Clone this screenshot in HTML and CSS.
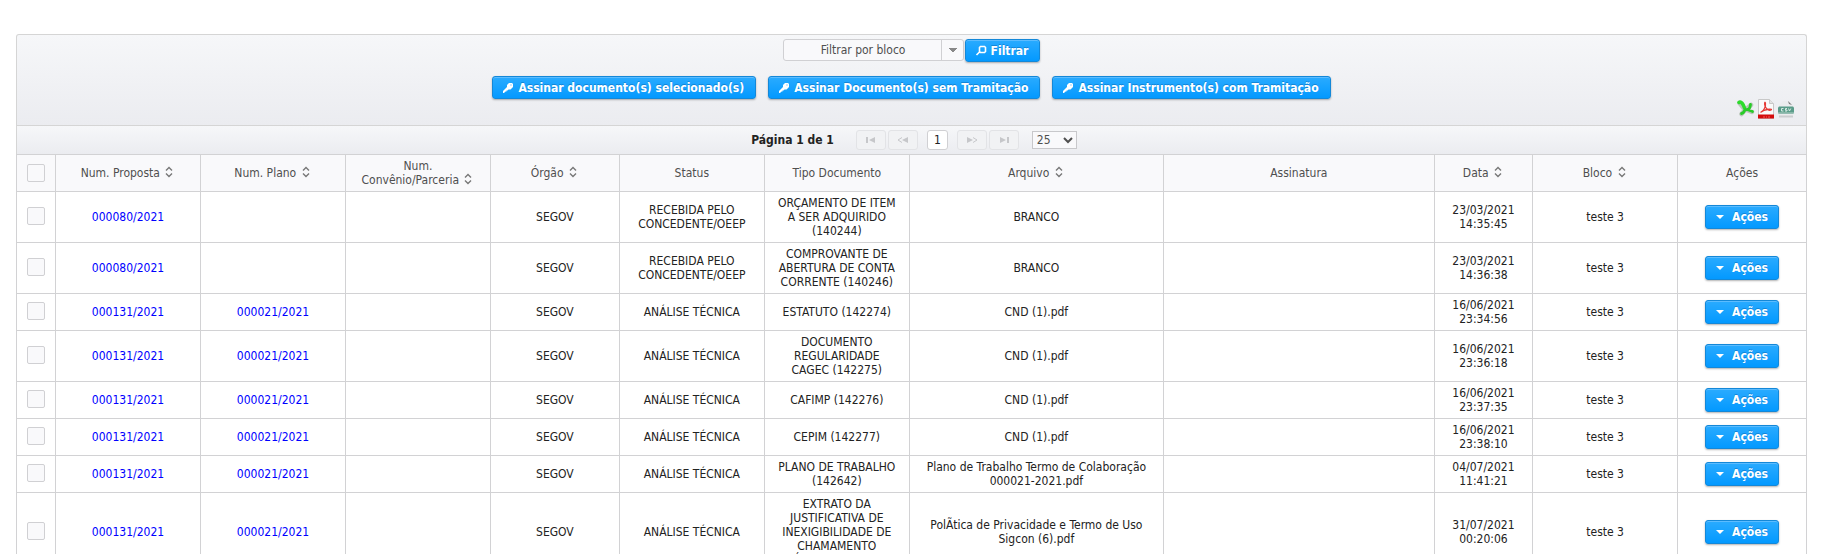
FILE: index.html
```html
<!DOCTYPE html>
<html lang="pt-BR">
<head>
<meta charset="utf-8">
<title>Assinatura de documentos</title>
<link rel="stylesheet" href="styles.css">
</head>
<body>
<svg class="sprite" aria-hidden="true">
  <symbol id="sort" viewBox="0 0 8 12"><path d="M1 4.500 4 1.500 7 4.500M1 7.500 4 10.500 7 7.500" fill="none" stroke="#777" stroke-width="1.400"/></symbol>
  <symbol id="key" viewBox="0 0 12 12"><path d="M7 1h3l1 1v3L8.500 7.500H6.500L5.500 8.500H4.500v1H3.500L2 11H1V9l4-4V3z" fill="#fff"/><path d="M8.500 2.500h1v1h-1z" fill="#35a9f7"/></symbol>
  <symbol id="lens" viewBox="0 0 12 12"><path d="M5.500 1.500h4l1 1v4l-1 1h-4l-1-1v-4zM4.500 7 1.500 10" fill="none" stroke="#fff" stroke-width="1.600"/></symbol>
  <symbol id="down" viewBox="0 0 8 4"><path d="M0 0h8L4 4z" fill="currentColor"/></symbol>
  <symbol id="first" viewBox="0 0 10 6"><path d="M0 0h2v6H0zM9 0v6L3 3z" fill="currentColor"/></symbol>
  <symbol id="prev" viewBox="0 0 12 6"><path d="M11 0v6L5 3z" fill="currentColor"/><path d="M5 .5 1 3l4 2.500" fill="none" stroke="currentColor"/></symbol>
</svg>

<main class="datatable">
  <div class="toolbar">
    <div class="toolbar-row filter">
      <select class="block-filter" aria-label="Filtrar por bloco"><option>Filtrar por bloco</option></select>
      <button class="btn"><svg class="icon"><use href="#lens"/></svg>Filtrar</button>
    </div>
    <div class="toolbar-row actions">
      <button class="btn"><svg class="icon"><use href="#key"/></svg>Assinar documento(s) selecionado(s)</button>
      <button class="btn"><svg class="icon"><use href="#key"/></svg>Assinar Documento(s) sem Tramitação</button>
      <button class="btn"><svg class="icon"><use href="#key"/></svg>Assinar Instrumento(s) com Tramitação</button>
    </div>
    <div class="exports">
      <a href="#xls" aria-label="Exportar Excel"><svg width="18" height="20" viewBox="0 0 18 20"><path d="M2.500 4 7 9.500M4.500 15 8 11 14 6M10 11l5 2" fill="none" stroke="#b9c4b9" stroke-width="4.500" stroke-linecap="round"/><path d="M2 3.500C4 2 6.500 5 7.500 9" fill="none" stroke="#2cdc2c" stroke-width="3.500" stroke-linecap="round"/><path d="M4.500 14.500C8 14 7 10 9 10.500s4 0 4.500-5M10.500 10.500l5 2" fill="none" stroke="#28cc28" stroke-width="2.800" stroke-linecap="round"/></svg></a>
      <a href="#pdf" aria-label="Exportar PDF"><svg width="18" height="20" viewBox="0 0 18 20"><path d="M1.500.5h11l4 4v15h-15z" fill="#fafafa" stroke="#c8c8c8"/><path d="M12.500.5v4h4" fill="#e4e4e4" stroke="#c8c8c8"/><path d="M1 15.500h16v4H1z" fill="#d40c0c"/><path d="M6 18h2m1 0h1m1 0h2" stroke="#ee5a5a"/><path d="M4 13c3-1 5-6 4.500-9-.5-2-1.500 0-.5 3s4 5 6 4-3-1.500-7 .5c-2 1-3.500 2-3 1.500z" fill="none" stroke="#e53935" stroke-width="1.200"/></svg></a>
      <a href="#csv" aria-label="Exportar CSV"><svg width="18" height="20" viewBox="0 0 18 20"><path d="M2 6 6 2h6l4 4v11H2z" fill="#ebecee"/><path d="m11 2 4 4-3-1z" fill="#777"/><path d="M2 7.500h14l1 1v5l-1 1H2l-1-1v-5z" fill="#5a9c89"/><path d="M1 13h16v1.500H1z" fill="#86b5a7"/><path d="M6.500 9.500h-2v2.500h2M10 9.500H8.500V11H10v1H8M11.500 9.500l1 2.500 1.300-2.500" fill="none" stroke="#d5e9e2"/><path d="M2 17.500h14" stroke="#cbcdcf" stroke-width="2"/></svg></a>
    </div>
  </div>

  <nav class="paginator" aria-label="Paginação">
    <span class="current">Página 1 de 1</span>
    <button class="page-btn" disabled aria-label="Primeira"><svg width="10" height="6"><use href="#first"/></svg></button>
    <button class="page-btn" disabled aria-label="Anterior"><svg width="12" height="6"><use href="#prev"/></svg></button>
    <button class="page-num">1</button>
    <button class="page-btn" disabled aria-label="Próxima"><svg class="flip" width="12" height="6"><use href="#prev"/></svg></button>
    <button class="page-btn" disabled aria-label="Última"><svg class="flip" width="10" height="6"><use href="#first"/></svg></button>
    <select class="page-size" aria-label="Linhas por página"><option>25</option></select>
  </nav>

  <table class="grid">
    <colgroup><col class="c-check"><col class="c-std"><col class="c-std"><col class="c-std"><col class="c-small"><col class="c-std"><col class="c-std"><col class="c-file"><col class="c-sign"><col class="c-date"><col class="c-std"><col class="c-small"></colgroup>
    <thead>
      <tr>
        <th><input type="checkbox" class="check" aria-label="Selecionar todos"></th>
        <th><button class="sort">Num. Proposta <svg><use href="#sort"/></svg></button></th>
        <th><button class="sort">Num. Plano <svg><use href="#sort"/></svg></button></th>
        <th><button class="sort">Num. Convênio/Parceria&nbsp;<svg><use href="#sort"/></svg></button></th>
        <th><button class="sort">Órgão <svg><use href="#sort"/></svg></button></th>
        <th>Status</th>
        <th>Tipo Documento</th>
        <th><button class="sort">Arquivo <svg><use href="#sort"/></svg></button></th>
        <th>Assinatura</th>
        <th><button class="sort">Data <svg><use href="#sort"/></svg></button></th>
        <th><button class="sort">Bloco <svg><use href="#sort"/></svg></button></th>
        <th>Ações</th>
      </tr>
    </thead>
    <tbody>
      <tr><td><input type="checkbox" class="check" aria-label="Selecionar"></td><td><a href="#p">000080/2021</a></td><td></td><td></td><td>SEGOV</td><td>RECEBIDA PELO CONCEDENTE/OEEP</td><td>ORÇAMENTO DE ITEM A SER ADQUIRIDO (140244)</td><td>BRANCO</td><td></td><td>23/03/2021 14:35:45</td><td>teste 3</td><td><button class="btn menu"><svg class="caret"><use href="#down"/></svg>Ações</button></td></tr>
      <tr><td><input type="checkbox" class="check" aria-label="Selecionar"></td><td><a href="#p">000080/2021</a></td><td></td><td></td><td>SEGOV</td><td>RECEBIDA PELO CONCEDENTE/OEEP</td><td>COMPROVANTE DE ABERTURA DE CONTA CORRENTE (140246)</td><td>BRANCO</td><td></td><td>23/03/2021 14:36:38</td><td>teste 3</td><td><button class="btn menu"><svg class="caret"><use href="#down"/></svg>Ações</button></td></tr>
      <tr><td><input type="checkbox" class="check" aria-label="Selecionar"></td><td><a href="#p">000131/2021</a></td><td><a href="#n">000021/2021</a></td><td></td><td>SEGOV</td><td>ANÁLISE TÉCNICA</td><td>ESTATUTO (142274)</td><td>CND (1).pdf</td><td></td><td>16/06/2021 23:34:56</td><td>teste 3</td><td><button class="btn menu"><svg class="caret"><use href="#down"/></svg>Ações</button></td></tr>
      <tr><td><input type="checkbox" class="check" aria-label="Selecionar"></td><td><a href="#p">000131/2021</a></td><td><a href="#n">000021/2021</a></td><td></td><td>SEGOV</td><td>ANÁLISE TÉCNICA</td><td>DOCUMENTO REGULARIDADE CAGEC (142275)</td><td>CND (1).pdf</td><td></td><td>16/06/2021 23:36:18</td><td>teste 3</td><td><button class="btn menu"><svg class="caret"><use href="#down"/></svg>Ações</button></td></tr>
      <tr><td><input type="checkbox" class="check" aria-label="Selecionar"></td><td><a href="#p">000131/2021</a></td><td><a href="#n">000021/2021</a></td><td></td><td>SEGOV</td><td>ANÁLISE TÉCNICA</td><td>CAFIMP (142276)</td><td>CND (1).pdf</td><td></td><td>16/06/2021 23:37:35</td><td>teste 3</td><td><button class="btn menu"><svg class="caret"><use href="#down"/></svg>Ações</button></td></tr>
      <tr><td><input type="checkbox" class="check" aria-label="Selecionar"></td><td><a href="#p">000131/2021</a></td><td><a href="#n">000021/2021</a></td><td></td><td>SEGOV</td><td>ANÁLISE TÉCNICA</td><td>CEPIM (142277)</td><td>CND (1).pdf</td><td></td><td>16/06/2021 23:38:10</td><td>teste 3</td><td><button class="btn menu"><svg class="caret"><use href="#down"/></svg>Ações</button></td></tr>
      <tr><td><input type="checkbox" class="check" aria-label="Selecionar"></td><td><a href="#p">000131/2021</a></td><td><a href="#n">000021/2021</a></td><td></td><td>SEGOV</td><td>ANÁLISE TÉCNICA</td><td>PLANO DE TRABALHO (142642)</td><td>Plano de Trabalho Termo de Colaboração 000021-2021.pdf</td><td></td><td>04/07/2021 11:41:21</td><td>teste 3</td><td><button class="btn menu"><svg class="caret"><use href="#down"/></svg>Ações</button></td></tr>
      <tr><td><input type="checkbox" class="check" aria-label="Selecionar"></td><td><a href="#p">000131/2021</a></td><td><a href="#n">000021/2021</a></td><td></td><td>SEGOV</td><td>ANÁLISE TÉCNICA</td><td>EXTRATO DA JUSTIFICATIVA DE INEXIGIBILIDADE DE CHAMAMENTO PÚBLICO (143210)</td><td>PolÃtica de Privacidade e Termo de Uso Sigcon (6).pdf</td><td></td><td>31/07/2021 00:20:06</td><td>teste 3</td><td><button class="btn menu"><svg class="caret"><use href="#down"/></svg>Ações</button></td></tr>
    </tbody>
  </table>
</main>
</body>
</html>
```
FILE: styles.css
```css
* { box-sizing: border-box; }
body {
  margin: 0;
  padding: 34px 18px 0 16px;
  background: #fff;
  color: #222;
  font: 12px/14px Tahoma, "DejaVu Sans Condensed", "DejaVu Sans", sans-serif;
}
.sprite { display: none; }
button, select, input { font: inherit; margin: 0; }

.toolbar {
  display: flex;
  flex-direction: column;
  padding: 4px 11px 6px;
  border: 1px solid #d5d5d5;
  border-bottom: 0;
  border-radius: 3px 3px 0 0;
  background: linear-gradient(#f6f7f9, #ebecf0);
}
.toolbar-row { display: flex; justify-content: center; }
.filter { gap: 1px; margin-bottom: 14px; }
.actions { gap: 12px; }
.exports { display: flex; justify-content: flex-end; gap: 2px; }
.exports svg { display: block; }

.btn {
  display: inline-flex;
  align-items: center;
  height: 23px;
  padding: 0 11px 0 9px;
  border: 1px solid #1488d8;
  border-radius: 3px;
  background: linear-gradient(#2aabff, #0399ff);
  box-shadow: inset 0 1px 0 #5cbcff, 0 1px 2px rgba(0, 0, 0, .3);
  color: #fff;
  font-weight: bold;
  text-shadow: 0 -1px 0 rgba(0, 80, 150, .4);
  white-space: nowrap;
}
.icon { width: 12px; height: 12px; margin-right: 4px; }
.btn.menu { height: 24px; padding: 0 10px; vertical-align: middle; }
.caret { width: 8px; height: 4px; margin-right: 8px; }

.block-filter {
  width: 181px;
  height: 22px;
  padding: 0 20px 0 0;
  appearance: none;
  border: 1px solid #d0d0d3;
  border-radius: 3px;
  background:
    linear-gradient(#d0d0d3, #d0d0d3) right 21px top / 1px 100% no-repeat,
    linear-gradient(to bottom right, #888 50%, transparent 51%) right 6px center / 4px 4px no-repeat,
    linear-gradient(to bottom left, #888 50%, transparent 51%) right 10px center / 4px 4px no-repeat,
    #f9f9fb;
  color: #4f4f4f;
  text-align-last: center;
}

.paginator {
  display: flex;
  justify-content: center;
  align-items: center;
  gap: 2px;
  height: 30px;
  padding-left: 5px;
  border: 1px solid #d5d5d5;
  background: linear-gradient(#f6f7f9, #ebecf0);
}
.current { margin-right: 20px; font-weight: bold; }
.page-btn, .page-num {
  display: flex;
  align-items: center;
  justify-content: center;
  height: 20px;
  padding: 0;
  border: 1px solid #d0d0d3;
  border-radius: 3px;
}
.page-btn { width: 30px; border-color: #e2e3e6; background: #f1f2f4; color: #c6c7ca; }
.page-num { width: 21px; margin: 0 7px; background: #fff; color: #222; }
.flip { transform: rotate(180deg); }
.page-size {
  width: 45px;
  height: 18px;
  margin-left: 11px;
  padding: 0;
  border: 1px solid #c8c8cb;
  background: #f9f9fb;
  color: #4f4f4f;
}

.grid { width: 100%; margin-top: -1px; border-collapse: collapse; table-layout: fixed; }
.c-check { width: 39px; }
.c-std { width: 8.1%; }
.c-small { width: 7.2%; }
.c-file { width: 14.2%; }
.c-date { width: 5.5%; }
.grid th, .grid td {
  padding: 4px 10px;
  border: 1px solid #d2d2d4;
  text-align: center;
  vertical-align: middle;
}
.grid th { background: #f9f9fb; color: #4f4f4f; font-weight: normal; }
.grid a { color: #00f; text-decoration: none; }
.grid tr > :first-child, .grid tr > :last-child { padding: 2px 4px; }

.sort { padding: 0; border: 0; background: none; color: inherit; }
.sort svg { width: 8px; height: 12px; margin: 0 2px; vertical-align: -1px; }

.check {
  display: block;
  width: 18px;
  height: 18px;
  margin: 0 auto;
  appearance: none;
  border: 1px solid #d0d0d3;
  border-radius: 2px;
  background: #f9f9fb;
}
tbody .check { margin-bottom: 3px; }
```
